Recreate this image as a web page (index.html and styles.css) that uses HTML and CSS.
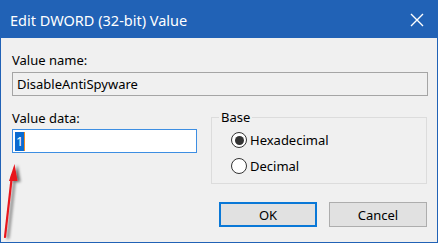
FILE: index.html
```html
<!DOCTYPE html>
<html>
<head>
<meta charset="utf-8">
<link rel="stylesheet" href="styles.css">
</head>
<body>
<div class="window">
  <div class="titlebar">
    <span class="title">Edit DWORD (32-bit) Value</span>
    <svg class="close" width="14" height="14" viewBox="0 0 14 14"><path d="M1 1L13 13M13 1L1 13" stroke="#fff" stroke-width="1.4" fill="none"/></svg>
  </div>
  <div class="content">
    <div class="label lbl-name">Value name:</div>
    <div class="textbox readonly">DisableAntiSpyware</div>
    <div class="row">
      <div class="col-left">
        <div class="label lbl-data">Value data:</div>
        <div class="textbox focused"><span class="sel">1</span><span class="caret"></span></div>
      </div>
      <fieldset class="group">
        <legend>Base</legend>
        <div class="radio"><span class="dot checked"></span><span>Hexadecimal</span></div>
        <div class="radio"><span class="dot"></span><span>Decimal</span></div>
      </fieldset>
    </div>
    <div class="buttons">
      <div class="btn default">OK</div>
      <div class="btn">Cancel</div>
    </div>
  </div>
</div>
<svg class="arrow" width="40" height="90" viewBox="0 0 40 90">
  <defs>
    <filter id="sh" x="-50%" y="-50%" width="200%" height="200%">
      <feGaussianBlur in="SourceAlpha" stdDeviation="1.5"/>
      <feOffset dx="3" dy="1" result="b"/>
      <feComponentTransfer><feFuncA type="linear" slope="0.55"/></feComponentTransfer>
      <feMerge><feMergeNode/><feMergeNode in="SourceGraphic"/></feMerge>
    </filter>
  </defs>
  <g filter="url(#sh)">
    <path d="M4 84L11 22" stroke="#e8141b" stroke-width="2.2" fill="none" stroke-linecap="round"/>
    <path d="M13.5 11L8 28L16.5 28Z" fill="#e8141b"/>
  </g>
</svg>
</body>
</html>
```
FILE: styles.css
```css
html, body {
  margin: 0;
  padding: 0;
  background: #ffffff;
}
body {
  width: 440px;
  height: 245px;
  position: relative;
  overflow: hidden;
  font-family: "Noto Sans", "Open Sans", sans-serif;
  font-size: 13px;
  color: #000;
}
.window {
  width: 436px;
  height: 242px;
  border: 1px solid #2162b6;
  border-top: none;
  background: #f0f0f0;
  display: flex;
  flex-direction: column;
}
.titlebar {
  height: 38px;
  background: #2162b6;
  display: flex;
  align-items: center;
  justify-content: space-between;
  padding: 0 14px 0 10px;
  margin: 0 -1px;
  color: #fff;
}
.title {
  font-size: 14.5px;
  margin-top: 2px;
}
.close {
  margin-top: 1px;
}
.content {
  padding: 13px 10px 0 11px;
  display: flex;
  flex-direction: column;
}
.label {
  height: 20px;
  line-height: 18px;
}
.lbl-name {
  margin-bottom: 1px;
}
.textbox {
  box-sizing: border-box;
  height: 24px;
  border: 1px solid #a5a5a5;
  padding: 0 4px;
  line-height: 22px;
  display: flex;
  align-items: center;
}
.textbox.readonly {
  width: 416px;
  background: #f0f0f0;
}
.row {
  display: flex;
  justify-content: space-between;
  align-items: flex-start;
  margin-top: 13px;
}
.col-left {
  width: 185px;
  display: flex;
  flex-direction: column;
}
.textbox.focused {
  background: #fff;
  border-color: #3d8ee2;
  padding: 0 2px;
}
.sel {
  background: #0a6bd1;
  color: #fff;
  padding: 0 1px;
  line-height: 19px;
}
.caret {
  width: 1px;
  height: 19px;
  background: #f08a24;
}
.group {
  box-sizing: border-box;
  width: 216px;
  height: 75px;
  margin: 0;
  border: 1px solid #dcdcdc;
  padding: 2px 0 0 19px;
}
.group legend {
  padding: 0 2px;
  margin-left: -12px;
  line-height: 16px;
}
.radio {
  display: flex;
  align-items: center;
  height: 26px;
}
.dot {
  box-sizing: border-box;
  width: 16px;
  height: 16px;
  border: 1.5px solid #333;
  border-radius: 50%;
  background: #fff;
  margin-right: 3px;
  display: flex;
  align-items: center;
  justify-content: center;
}
.dot.checked::after {
  content: "";
  width: 9px;
  height: 9px;
  border-radius: 50%;
  background: #333;
}
.buttons {
  display: flex;
  justify-content: flex-end;
  gap: 12px;
  margin-top: 18px;
}
.btn {
  box-sizing: border-box;
  width: 98px;
  height: 25px;
  background: #e1e1e1;
  border: 1px solid #adadad;
  display: flex;
  align-items: center;
  justify-content: center;
}
.btn.default {
  border: 2px solid #0a78d7;
}
.arrow {
  position: absolute;
  left: 1px;
  top: 153px;
}
```
